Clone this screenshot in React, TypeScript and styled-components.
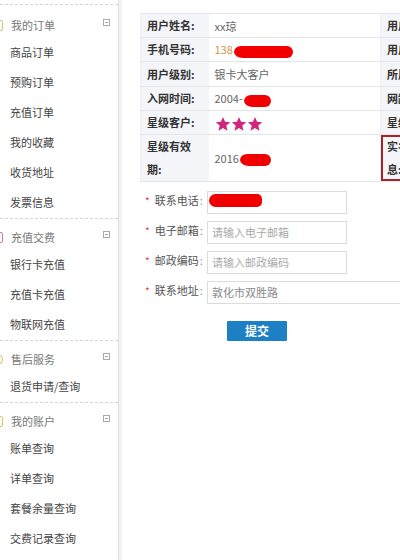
import React from "react";
import styled, { createGlobalStyle } from "styled-components";

const Global = createGlobalStyle`
  html, body {
    margin: 0;
    padding: 0;
    width: 400px;
    height: 560px;
    overflow: hidden;
    background: #fff;
    font-family: "Noto Sans CJK SC", "Liberation Sans", sans-serif;
  }
  * { box-sizing: border-box; }
`;

const Page = styled.div`
  display: flex;
  width: 400px;
  height: 560px;
  overflow: hidden;
`;

const Sidebar = styled.nav`
  width: 119px;
  flex: none;
  padding-top: 4px;
  border-right: 1px solid #dedede;
  background: #fff;
  overflow: hidden;
`;

const Header = styled.div`
  display: flex;
  align-items: center;
  height: 30px;
  padding-top: 6px;
  padding-right: 8px;
  font-size: 11px;
  color: #777;
`;

const Section = styled.div`
  border-top: 1px dashed #d6d6d6;
  padding-bottom: 1px;
  &:first-child ${Header} {
    height: 32px;
    padding-top: 8px;
  }
`;

const HeaderIcon = styled.span<{ $c: string; $round?: boolean }>`
  width: 12px;
  height: 11px;
  margin-left: -9px;
  margin-right: 8px;
  border: 1px solid ${(p) => p.$c};
  border-radius: ${(p) => (p.$round ? "50%" : "2px")};
  background: #fff;
  flex: none;
`;

const Toggle = styled.span`
  margin-left: auto;
  width: 7px;
  height: 7px;
  border: 1px solid #aaa;
  position: relative;
  transform: translateY(-3px);
  &::after {
    content: "";
    position: absolute;
    left: 1px;
    right: 1px;
    top: 2px;
    height: 1px;
    background: #aaa;
  }
`;

const Item = styled.div`
  height: 30px;
  line-height: 30px;
  padding-left: 10px;
  font-size: 11px;
  color: #444;
  white-space: nowrap;
`;

const Main = styled.main`
  flex: 1;
  border-left: 3px solid #f2f2f2;
  padding: 13px 0 0 18px;
  overflow: hidden;
  min-width: 0;
`;

const InfoTable = styled.table`
  border-collapse: collapse;
  table-layout: fixed;
  width: 420px;
  border-top: 1px solid #e4e6e9;
  font-size: 11px;
`;

const Row = styled.tr<{ $h?: number }>`
  height: ${(p) => p.$h ?? 24}px;
`;

const Label = styled.td<{ $flag?: boolean }>`
  background: #f3f5f8;
  color: #333;
  font-weight: bold;
  padding: 0 8px 0 6px;
  line-height: 23px;
  border-bottom: 1px solid #e4e6e9;
  border-left: 1px solid #eceef1;
  vertical-align: middle;
  ${(p) => (p.$flag ? "box-shadow: inset 0 0 0 2px #a3242b;" : "")}
`;

const Value = styled.td<{ $tone?: string }>`
  color: ${(p) => p.$tone ?? "#666"};
  padding: 0 6px;
  border-bottom: 1px solid #e4e6e9;
  white-space: nowrap;
  vertical-align: middle;
`;

const Redact = styled.span<{ $w: number }>`
  display: inline-block;
  vertical-align: middle;
  width: ${(p) => p.$w}px;
  height: 12px;
  background: #f00000;
  border-radius: 7px 6px 6px 9px / 6px 6px 6px 6px;
  margin-left: 1px;
`;

const Stars = styled.span`
  display: inline-flex;
  gap: 0;
  vertical-align: middle;
`;

const Form = styled.form`
  margin-top: 6px;
  display: flex;
  flex-direction: column;
  gap: 7px;
`;

const FormRow = styled.div`
  display: grid;
  grid-template-columns: 67px auto;
  align-items: center;
  height: 23px;
`;

const FormLabel = styled.label`
  font-size: 11px;
  color: #555;
  padding-left: 5px;
  white-space: nowrap;
`;

const Required = styled.span`
  color: #e0393c;
  font-size: 10px;
  margin-right: 5px;
`;

const Colon = styled.span`
  color: #999;
  margin-left: 1px;
`;

const Field = styled.div<{ $w: number }>`
  position: relative;
  width: ${(p) => p.$w}px;
  height: 23px;
`;

const Input = styled.input`
  width: 100%;
  height: 100%;
  border: 1px solid #dcdcdc;
  padding: 0 4px;
  font-family: inherit;
  font-size: 11px;
  color: #888;
  outline: none;
  &::placeholder { color: #aaa; }
`;

const FieldRedact = styled.span`
  position: absolute;
  left: 2px;
  top: 6px;
  width: 53px;
  height: 13px;
  background: #f00000;
  border-radius: 8px 6px 6px 8px;
`;

const Actions = styled.div`
  padding-left: 87px;
  margin-top: 16px;
`;

const Submit = styled.button`
  width: 60px;
  height: 20px;
  border: none;
  border-radius: 1px;
  background: #1d7fc4;
  color: #fff;
  font-family: inherit;
  font-size: 12px;
  font-weight: bold;
  padding: 0;
  line-height: 20px;
`;

const Star = () => (
  <svg width="16" height="16" viewBox="0 0 24 24">
    <path
      d="M12 1.5l3.1 7.1 7.7.7-5.8 5.1 1.7 7.6L12 18l-6.7 4 1.7-7.6-5.8-5.1 7.7-.7z"
      fill="#d0267e"
    />
  </svg>
);

const sections = [
  { title: "我的订单", c: "#d8c27a", items: ["商品订单", "预购订单", "充值订单", "我的收藏", "收货地址", "发票信息"] },
  { title: "充值交费", c: "#c77bb0", items: ["银行卡充值", "充值卡充值", "物联网充值"] },
  { title: "售后服务", c: "#e0c060", round: true, items: ["退货申请/查询"] },
  { title: "我的账户", c: "#e2c35a", items: ["账单查询", "详单查询", "套餐余量查询", "交费记录查询"] },
];

export default function App() {
  return (
    <>
      <Global />
      <Page>
        <Sidebar>
          {sections.map((s) => (
            <Section key={s.title}>
              <Header>
                <HeaderIcon $c={s.c} $round={s.round} />
                {s.title}
                <Toggle />
              </Header>
              {s.items.map((it) => (
                <Item key={it}>{it}</Item>
              ))}
            </Section>
          ))}
        </Sidebar>
        <Main>
          <InfoTable>
            <colgroup>
              <col style={{ width: 68 }} />
              <col style={{ width: 172 }} />
              <col style={{ width: 68 }} />
              <col style={{ width: 112 }} />
            </colgroup>
            <tbody>
              <Row>
                <Label>用户姓名:</Label>
                <Value>xx琼</Value>
                <Label>用户状态:</Label>
                <Value>正常</Value>
              </Row>
              <Row>
                <Label>手机号码:</Label>
                <Value $tone="#cf9a4c">
                  138<Redact $w={59} />
                </Value>
                <Label>用户类型:</Label>
                <Value>后付费</Value>
              </Row>
              <Row $h={25}>
                <Label>用户级别:</Label>
                <Value>银卡大客户</Value>
                <Label>所属地市:</Label>
                <Value>延边</Value>
              </Row>
              <Row>
                <Label>入网时间:</Label>
                <Value>
                  2004-<Redact $w={27} />
                </Value>
                <Label>网龄:</Label>
                <Value>12年</Value>
              </Row>
              <Row $h={23}>
                <Label>星级客户:</Label>
                <Value>
                  <Stars>
                    <Star />
                    <Star />
                    <Star />
                  </Stars>
                </Value>
                <Label>星级积分:</Label>
                <Value>0</Value>
              </Row>
              <Row $h={47}>
                <Label>星级有效期:</Label>
                <Value>
                  2016<Redact $w={31} />
                </Value>
                <Label $flag>实名制信息:</Label>
                <Value>已登记</Value>
              </Row>
            </tbody>
          </InfoTable>
          <Form onSubmit={(e) => e.preventDefault()}>
            <FormRow>
              <FormLabel>
                <Required>*</Required>联系电话<Colon>:</Colon>
              </FormLabel>
              <Field $w={140}>
                <Input defaultValue="" />
                <FieldRedact />
              </Field>
            </FormRow>
            <FormRow>
              <FormLabel>
                <Required>*</Required>电子邮箱<Colon>:</Colon>
              </FormLabel>
              <Field $w={140}>
                <Input placeholder="请输入电子邮箱" />
              </Field>
            </FormRow>
            <FormRow>
              <FormLabel>
                <Required>*</Required>邮政编码<Colon>:</Colon>
              </FormLabel>
              <Field $w={140}>
                <Input placeholder="请输入邮政编码" />
              </Field>
            </FormRow>
            <FormRow>
              <FormLabel>
                <Required>*</Required>联系地址<Colon>:</Colon>
              </FormLabel>
              <Field $w={220}>
                <Input defaultValue="敦化市双胜路" />
              </Field>
            </FormRow>
          </Form>
          <Actions>
            <Submit type="button">提交</Submit>
          </Actions>
        </Main>
      </Page>
    </>
  );
}
